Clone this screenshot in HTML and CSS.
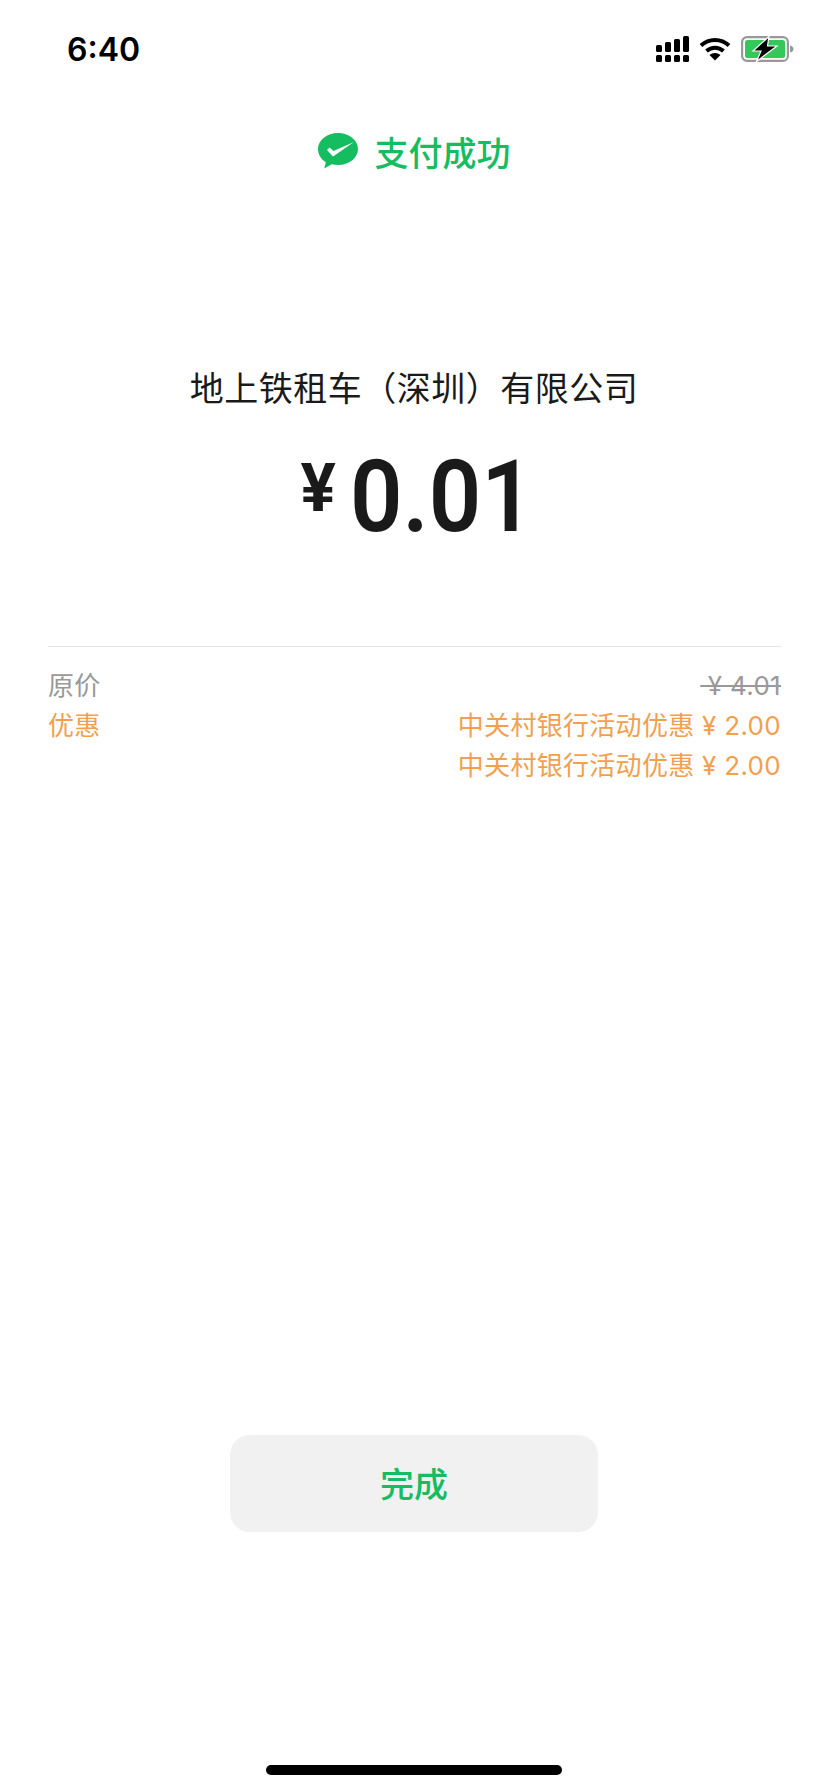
FILE: index.html
```html
<!DOCTYPE html>
<html lang="zh-CN">
<head>
    <meta charset="UTF-8">
    <meta name="viewport" content="width=device-width, initial-scale=1.0">
    <title>支付成功</title>
    <link rel="stylesheet" href="styles.css">
</head>
<body>

    <div class="page">
        <div class="status-bar">
            <span class="time">6:40</span>
            <div class="status-icons">
                <svg class="icon-signal" width="33" height="26" viewBox="0 0 33 26" fill="#000">
                    <rect x="0" y="9" width="6" height="7" rx="1.500"/>
                    <rect x="9" y="6" width="6" height="10" rx="1.500"/>
                    <rect x="18" y="3" width="6" height="13" rx="1.500"/>
                    <rect x="27" y="0" width="6" height="16" rx="1.500"/>
                    <rect x="0" y="19" width="6" height="7" rx="1.500"/>
                    <rect x="9" y="19" width="6" height="7" rx="1.500"/>
                    <rect x="18" y="19" width="6" height="7" rx="1.500"/>
                    <rect x="27" y="19" width="6" height="7" rx="1.500"/>
                </svg>
                <svg class="icon-wifi" width="32" height="24" viewBox="0 0 32 24" fill="none" stroke="#000" stroke-width="4">
                    <path d="M2 8.500C10 1 22 1 30 8.500"/>
                    <path d="M7.500 14C12.500 9.500 19.500 9.500 24.500 14"/>
                    <path d="M16 23.500L10.500 18C13.500 15.300 18.500 15.300 21.500 18Z" fill="#000" stroke="none"/>
                </svg>
                <svg class="icon-battery" width="53" height="26" viewBox="0 0 53 26">
                    <rect x="1.100" y="1.100" width="45.800" height="23.800" rx="5" fill="#fff" stroke="#999" stroke-width="2.200"/>
                    <rect x="4" y="4" width="40" height="18" rx="2.500" fill="#34c759"/>
                    <path d="M49 9.500C51.500 10 52.500 11.500 52.500 13S51.500 16 49 16.500Z" fill="#999"/>
                    <path d="M28 0.500L12 15H20L15.500 25.500L36 10H26.500Z" fill="#000" stroke="#fff" stroke-width="1.200"/>
                </svg>
            </div>
        </div>

        <div class="pay-title">
            <svg class="wechat-logo" width="40" height="36" viewBox="0 0 40 36">
                <path d="M20 0C9 0 0 7 0 16C0 21.500 3 26.200 7.800 29.200L6.200 35.500L13.800 31.200C15.800 31.700 18 32 20 32C31 32 40 25 40 16S31 0 20 0Z" fill="#14bd5f"/>
                <path d="M9 17L11.500 14.500L15.500 18L36 9L15 23.500Z" fill="#fff"/>
            </svg>
            <span>支付成功</span>
        </div>

        <div class="merchant">地上铁租车（深圳）有限公司</div>
        <div class="amount"><span class="currency">¥</span><span class="number">0.01</span></div>

        <div class="detail">
            <div class="detail-row">
                <span class="label">原价</span>
                <span class="price-old">&nbsp;¥ 4.01</span>
            </div>
            <div class="detail-row discount">
                <span class="label">优惠</span>
                <div class="discount-list">
                    <div>中关村银行活动优惠 ¥ 2.00</div>
                    <div>中关村银行活动优惠 ¥ 2.00</div>
                </div>
            </div>
        </div>

        <button class="done-btn">完成</button>

        <div class="home-bar"></div>
    </div>

</body>
</html>
```

FILE: styles.css
```css
body {
    margin: 0;
    background-color: #fff;
    font-family: "Roboto", "Noto Sans CJK SC", sans-serif;
}
.page {
    width: 828px;
    height: 1792px;
    display: flex;
    flex-direction: column;
    overflow: hidden;
}
.status-bar {
    height: 98px;
    display: flex;
    justify-content: space-between;
    align-items: center;
    padding: 0 34px 0 67px;
    box-sizing: border-box;
}
.time {
    font-family: "Inter", sans-serif;
    font-size: 32px;
    font-weight: 600;
    color: #000;
}
.status-icons {
    display: flex;
    align-items: center;
    gap: 10px;
}
.pay-title {
    margin-top: 31px;
    height: 44px;
    display: flex;
    justify-content: center;
    align-items: center;
    gap: 17px;
    color: #14bd5f;
    font-size: 34px;
    font-weight: 500;
}
.merchant {
    margin-top: 193px;
    text-align: center;
    font-size: 34px;
    letter-spacing: 0.5px;
    line-height: 46px;
    color: #1a1a1a;
}
.amount {
    margin-top: 27px;
    margin-left: 14px;
    display: flex;
    justify-content: center;
    align-items: baseline;
    gap: 6px;
    height: 116px;
    line-height: 116px;
    font-size: 100px;
    font-weight: 600;
    color: #1a1a1a;
}
.number {
    display: inline-block;
    transform: scaleX(0.92);
}
.currency {
    font-size: 66px;
    font-weight: 700;
    position: relative;
    top: -20px;
}
.detail {
    margin: 91px 47px 0 48px;
    padding-top: 19px;
    border-top: 1px solid #e5e5e5;
    font-family: "Inter", "Noto Sans CJK SC", sans-serif;
    font-size: 26px;
    letter-spacing: 0.3px;
    line-height: 40px;
}
.detail-row {
    display: flex;
    justify-content: space-between;
    color: #999;
}
.price-old {
    text-decoration: line-through;
    color: #999;
}
.discount {
    color: #f2a04e;
}
.discount-list {
    text-align: right;
}
.done-btn {
    margin: auto auto 0;
    width: 368px;
    height: 97px;
    padding-bottom: 3px;
    border: none;
    border-radius: 20px;
    background-color: #f1f1f1;
    color: #14bd5f;
    font-family: inherit;
    font-size: 34px;
    font-weight: 500;
}
.home-bar {
    margin: 233px auto 17px;
    width: 296px;
    height: 10px;
    border-radius: 5px;
    background-color: #000;
}
```
